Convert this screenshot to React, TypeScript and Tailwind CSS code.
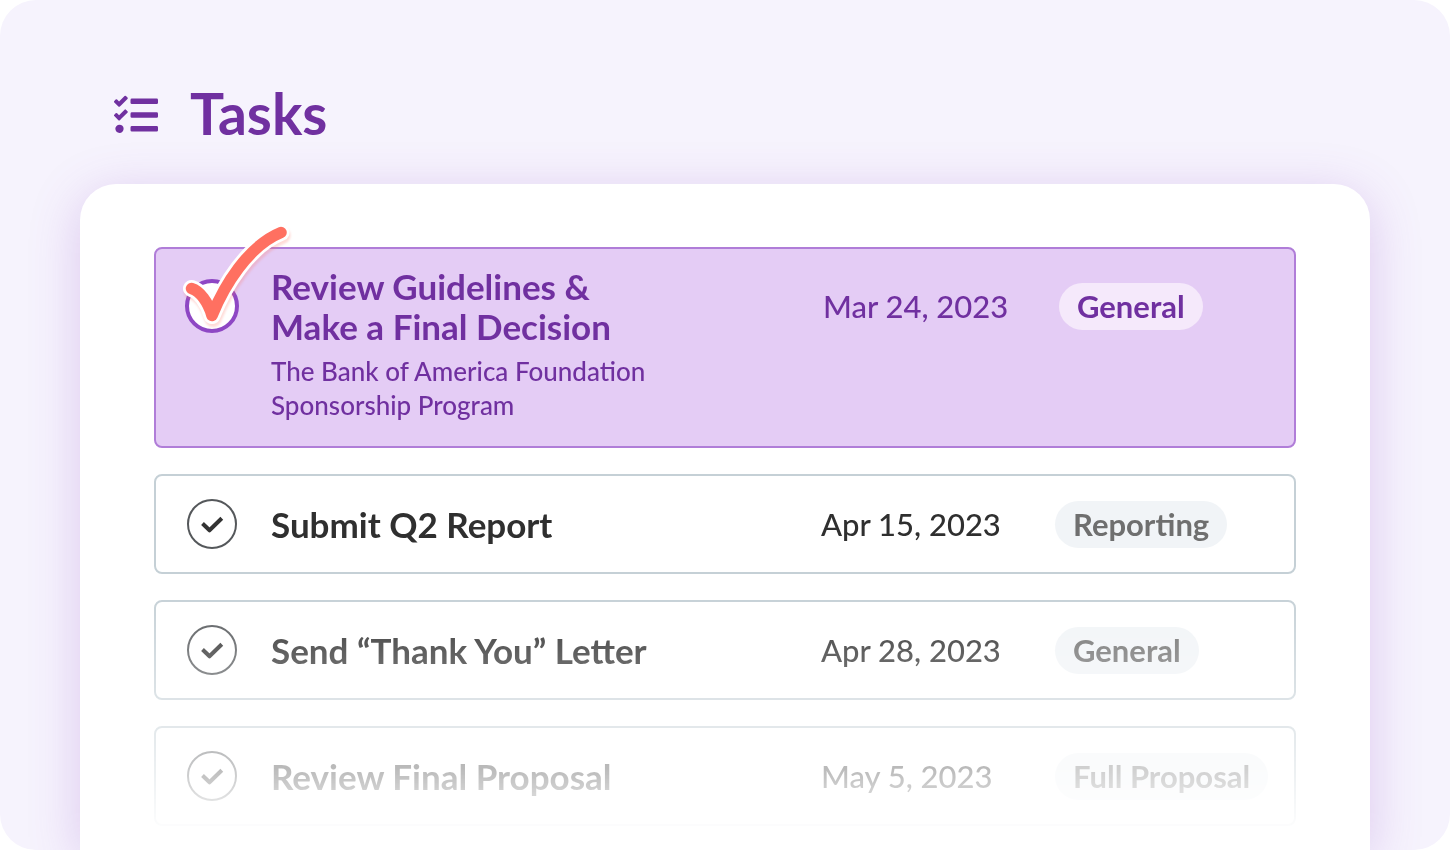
import { FaTasks } from "react-icons/fa";
import clsx from "clsx";

type Task = {
  id: string;
  title: string[];
  program?: string[];
  date: string;
  category: string;
  done?: boolean;
};

const tasks: Task[] = [
  {
    id: "guidelines",
    title: ["Review Guidelines &", "Make a Final Decision"],
    program: ["The Bank of America Foundation", "Sponsorship Program"],
    date: "Mar 24, 2023",
    category: "General",
    done: true,
  },
  {
    id: "q2-report",
    title: ["Submit Q2 Report"],
    date: "Apr 15, 2023",
    category: "Reporting",
  },
  {
    id: "thank-you",
    title: ["Send “Thank You” Letter"],
    date: "Apr 28, 2023",
    category: "General",
  },
  {
    id: "final-proposal",
    title: ["Review Final Proposal"],
    date: "May 5, 2023",
    category: "Full Proposal",
  },
];

function BigCheck() {
  const path = "M6.500 9.500C15 12 23 23 27 36.500C39 7 63 -33 96 -46.500";

  return (
    <svg
      viewBox="0 0 54 54"
      fill="none"
      strokeLinecap="round"
      strokeLinejoin="round"
      aria-hidden="true"
      className="pointer-events-none absolute inset-0 size-full overflow-visible"
    >
      <path
        d={path}
        stroke="#fff"
        strokeWidth="17"
        className="drop-shadow-[1px_3px_1px_rgba(255,112,97,0.25)]"
      />
      <path d={path} stroke="#ff7061" strokeWidth="11.500" />
    </svg>
  );
}

function SmallCheck() {
  return (
    <svg
      viewBox="0 0 50 50"
      fill="none"
      stroke="#333"
      strokeWidth="4"
      strokeLinejoin="round"
      aria-hidden="true"
      className="pointer-events-none absolute inset-0 m-auto size-[50px]"
    >
      <path d="M15.500 24.500L22.500 31.300L34.800 19.300" />
    </svg>
  );
}

function TaskRow({ task }: { task: Task }) {
  const { id, title, program, date, category, done } = task;

  return (
    <li
      className={clsx(
        "flex rounded-lg border-2 pl-[29px]",
        done
          ? "items-start border-[#b07dd8] bg-[#e4ccf5] pt-[17px] pb-6 text-[#7030a0]"
          : "h-[100px] items-center border-[#c5d0d6] bg-white text-[#2f2f2f]",
      )}
    >
      <div
        className={clsx(
          "relative grid size-[54px] shrink-0 place-items-center",
          done && "mt-[13px]",
        )}
      >
        <input
          id={id}
          type="checkbox"
          defaultChecked={done}
          className={clsx(
            "appearance-none rounded-full bg-white",
            done
              ? "size-[54px] border-4 border-[#8e47c4]"
              : "size-[50px] border-2 border-[#55585b]",
          )}
        />
        {done ? <BigCheck /> : <SmallCheck />}
      </div>

      <div className="ml-8 min-w-0 flex-1">
        <label htmlFor={id} className="block text-[35px] leading-10 font-bold">
          {title.map((line) => (
            <span key={line} className="block">
              {line}
            </span>
          ))}
        </label>
        {program && (
          <p className="mt-2 text-[26px] leading-[34px] font-medium">
            {program.map((line) => (
              <span key={line} className="block">
                {line}
              </span>
            ))}
          </p>
        )}
      </div>

      <time
        className={clsx(
          "shrink-0 text-[31px] leading-10 font-medium",
          done ? "mt-5 w-[236px]" : "w-[234px]",
        )}
      >
        {date}
      </time>

      <div
        className={clsx("shrink-0", done ? "mt-[17px] w-[235px]" : "w-[239px]")}
      >
        <span
          className={clsx(
            "inline-block rounded-full px-[18px] text-[31px] leading-[47px] font-bold",
            done ? "bg-[#f5e9fb]" : "bg-[#f1f4f7] text-[#6f6f6f]",
          )}
        >
          {category}
        </span>
      </div>
    </li>
  );
}

export default function App() {
  return (
    <main className="flex min-h-screen flex-col overflow-hidden rounded-[36px] bg-[#f6f3fd] px-20 font-['Lato',sans-serif]">
      <header className="flex items-center gap-8 px-[34px] pt-[83px] pb-[37px] text-[#7030a0]">
        <FaTasks aria-hidden="true" className="size-11" />
        <h1 className="pb-1 text-[57px] leading-[60px] font-bold">Tasks</h1>
      </header>

      <section className="flex-1 rounded-t-[36px] bg-white shadow-[0_10px_50px_rgba(142,71,196,0.25)]">
        {/* the list fades out towards the bottom of the card */}
        <ul className="flex flex-col gap-[26px] px-[74px] pt-[63px] pb-6 [mask-image:linear-gradient(to_bottom,black_61%,rgba(0,0,0,0.32)_88%,transparent_98%)]">
          {tasks.map((task) => (
            <TaskRow key={task.id} task={task} />
          ))}
        </ul>
      </section>
    </main>
  );
}
